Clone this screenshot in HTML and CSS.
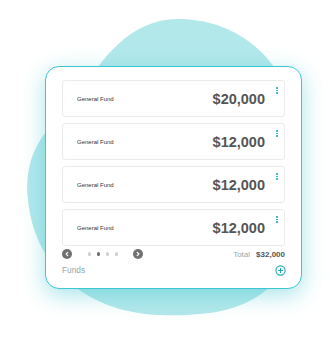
FILE: index.html
```html
<!doctype html>
<html>
  <head>
    <meta charset="UTF-8" />
    <title>Funds</title>
    <link rel="stylesheet" href="styles.css">
  </head>
  <body>
    <svg class="blob" width="330" height="337" viewBox="0 0 330 337" aria-hidden="true">
      <path d="M178 19 C235 19 280 55 294 110 C308 170 302 250 272 285 C242 314 200 316 160 315 C90 313 35 270 28 200 C22 140 60 120 80 95 C100 60 130 19 178 19 Z" fill="#b3e8eb" />
    </svg>
    <main class="stage">
      <section class="card">
        <ul class="fund-list">
          <li class="fund">
            <span class="fund-name">General Fund</span>
            <span class="fund-amount">$20,000</span>
            <span class="kebab"><i></i><i></i><i></i></span>
          </li>
          <li class="fund">
            <span class="fund-name">General Fund</span>
            <span class="fund-amount">$12,000</span>
            <span class="kebab"><i></i><i></i><i></i></span>
          </li>
          <li class="fund">
            <span class="fund-name">General Fund</span>
            <span class="fund-amount">$12,000</span>
            <span class="kebab"><i></i><i></i><i></i></span>
          </li>
          <li class="fund">
            <span class="fund-name">General Fund</span>
            <span class="fund-amount">$12,000</span>
            <span class="kebab"><i></i><i></i><i></i></span>
          </li>
        </ul>
        <div class="pager">
          <button class="pager-button" type="button">
            <svg width="10" height="10" viewBox="0 0 10 10"><path d="M5.8 3.3 L4.1 5 L5.8 6.7" fill="none" stroke="#fff" stroke-width="1.2" stroke-linecap="round" stroke-linejoin="round" /></svg>
          </button>
          <span class="dots">
            <i></i><i class="active"></i><i></i><i></i>
          </span>
          <button class="pager-button" type="button">
            <svg width="10" height="10" viewBox="0 0 10 10"><path d="M4.2 3.3 L5.9 5 L4.2 6.7" fill="none" stroke="#fff" stroke-width="1.2" stroke-linecap="round" stroke-linejoin="round" /></svg>
          </button>
          <span class="total">
            <span class="total-label">Total</span>
            <span class="total-value">$32,000</span>
          </span>
        </div>
        <div class="card-footer">
          <span class="card-title">Funds</span>
          <svg class="add" width="11" height="11" viewBox="0 0 11 11">
            <circle cx="5.5" cy="5.5" r="4.6" fill="none" stroke="#1eabbc" stroke-width="1.1" />
            <path d="M5.5 3.1 V7.9 M3.1 5.5 H7.9" stroke="#1eabbc" stroke-width="1.1" />
          </svg>
        </div>
      </section>
    </main>
  </body>
</html>
```

FILE: styles.css
```css
* {
  margin: 0;
  padding: 0;
  box-sizing: border-box;
}

body {
  position: relative;
  width: 330px;
  height: 337px;
  overflow: hidden;
  background: #fff;
  font-family: "Liberation Sans", Arial, sans-serif;
}

.blob {
  position: absolute;
  left: 0;
  top: 0;
}

.stage {
  position: relative;
  padding: 66px 0 0 45px;
}

.card {
  width: 257px;
  padding: 13px 16px 13px 16px;
  border: 1px solid #3cc7d2;
  border-radius: 14px;
  background: #fff;
  box-shadow: 0 6px 22px rgba(60, 196, 206, 0.45);
}

.fund-list {
  list-style: none;
  display: flex;
  flex-direction: column;
  gap: 6px;
}

.fund {
  position: relative;
  display: flex;
  align-items: center;
  justify-content: space-between;
  height: 37px;
  padding: 0 19px 0 14px;
  border: 1px solid #ebebeb;
  border-radius: 3px;
}

.fund-name {
  font-size: 6px;
  color: #333;
}

.fund-amount {
  font-size: 14.5px;
  font-weight: bold;
  color: #555;
}

.kebab {
  position: absolute;
  top: 6px;
  right: 6px;
  display: flex;
  flex-direction: column;
  gap: 1px;
}

.kebab i {
  width: 1.6px;
  height: 1.6px;
  border-radius: 50%;
  background: #1eabbc;
}

.pager {
  display: flex;
  align-items: center;
  height: 10px;
  margin-top: 3px;
}

.pager-button {
  display: flex;
  width: 10px;
  height: 10px;
  border: none;
  border-radius: 50%;
  background: #717171;
}

.dots {
  display: flex;
  gap: 5.5px;
  margin: 0 15px 0 15.5px;
}

.dots i {
  width: 3.5px;
  height: 3.5px;
  border-radius: 50%;
  background: #cfcfcf;
}

.dots i.active {
  background: #6f6f6f;
}

.total {
  display: flex;
  gap: 6px;
  margin-left: auto;
  font-size: 8px;
}

.total-label {
  color: #97a8ad;
}

.total-value {
  font-weight: bold;
  color: #555;
}

.card-footer {
  display: flex;
  align-items: center;
  justify-content: space-between;
  height: 10px;
  margin-top: 6px;
}

.card-title {
  font-size: 8.3px;
  color: #8fa8ad;
}

.add {
  margin-right: -1px;
}
```
